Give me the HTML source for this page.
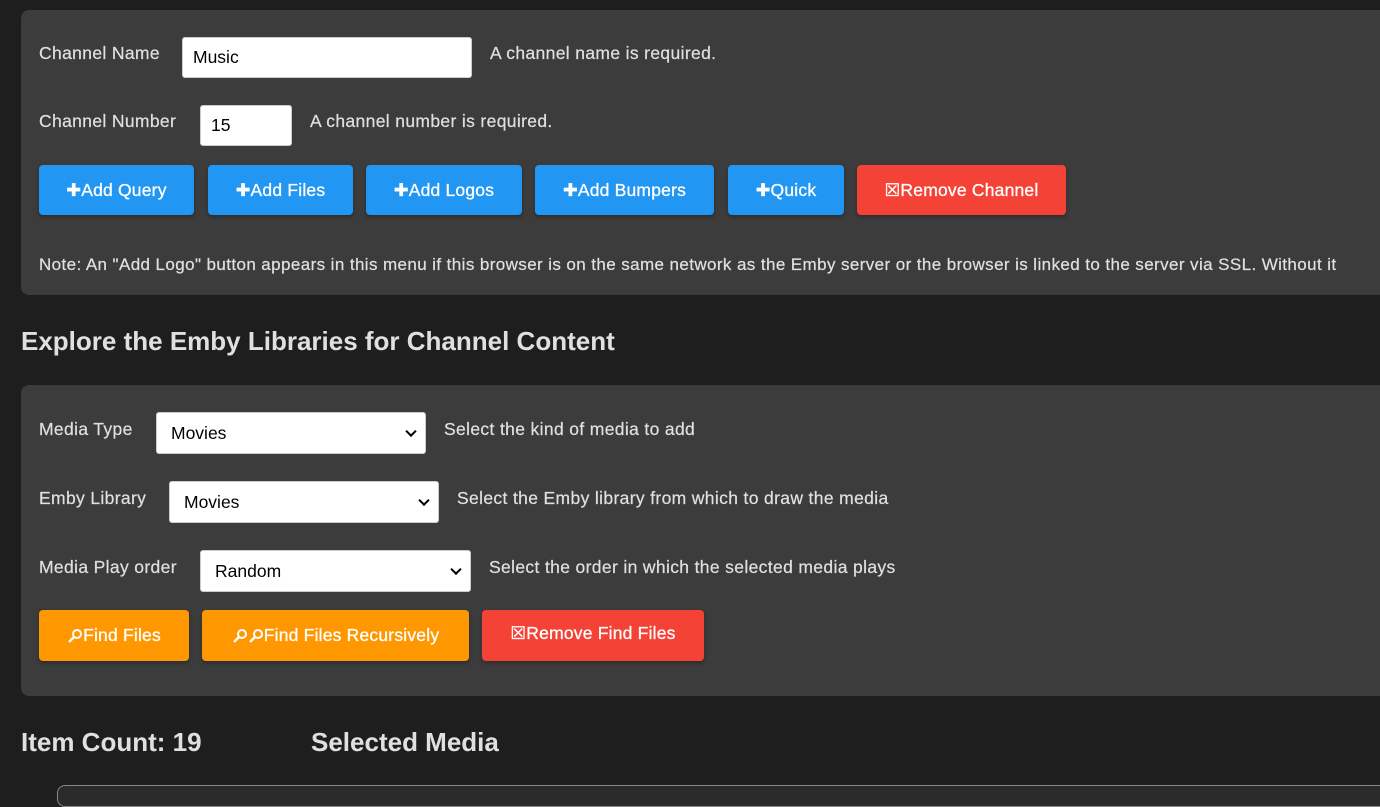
<!DOCTYPE html>
<html><head><style>
body{margin:0;width:1380px;height:789px;overflow:hidden;background:#1e1e1e;font-family:"Liberation Sans",Arial,sans-serif;color:#e0e0e0;position:relative}
.a{position:absolute;white-space:nowrap}
.p{position:absolute;left:21px;width:1400px;background:#3c3c3c;border-radius:8px}
.t{font-size:17.5px;letter-spacing:0.35px;color:#e0e0e0;-webkit-text-stroke:0.2px #e0e0e0}
.in{position:absolute;background:#fff;border:1px solid #ccc;border-radius:3px;color:#000;font-size:17.5px;box-sizing:border-box;padding:0 0 0 10px;display:flex;align-items:center}
.sel{padding-left:14px}
.sel:after{content:"";position:absolute;right:10px;top:50%;width:6px;height:6px;border-right:2px solid #000;border-bottom:2px solid #000;transform:translateY(-70%) rotate(45deg)}
.b{position:absolute;height:50px;border-radius:4px;color:#fff;font-size:17.5px;letter-spacing:0.2px;-webkit-text-stroke:0.3px #fff;display:flex;align-items:center;justify-content:center;box-shadow:0 2px 4px rgba(0,0,0,.3)}
.bl{background:#2196f3}.or{background:#ff9800}.rd{background:#f44336}
h2{margin:0;font-size:26px;font-weight:bold;color:#e0e0e0}
svg{display:inline-block;vertical-align:middle}
</style></head><body>
<div class="p" style="top:10px;height:285px"></div>
<div class="a t" style="left:39px;top:43px">Channel Name</div>
<div class="in" style="left:182px;top:37px;width:290px;height:41px">Music</div>
<div class="a t" style="left:490px;top:43px">A channel name is required.</div>
<div class="a t" style="left:39px;top:111px">Channel Number</div>
<div class="in" style="left:200px;top:105px;width:92px;height:41px">15</div>
<div class="a t" style="left:310px;top:111px">A channel number is required.</div>
<div class="b bl" style="left:39px;top:165px;width:155px">✚Add Query</div>
<div class="b bl" style="left:208px;top:165px;width:145px">✚Add Files</div>
<div class="b bl" style="left:366px;top:165px;width:156px">✚Add Logos</div>
<div class="b bl" style="left:535px;top:165px;width:179px">✚Add Bumpers</div>
<div class="b bl" style="left:728px;top:165px;width:116px">✚Quick</div>
<div class="b rd" style="left:857px;top:165px;width:209px">☒Remove Channel</div>
<div class="a t" style="left:39px;top:255px;font-size:17px;letter-spacing:0.4px">Note: An "Add Logo" button appears in this menu if this browser is on the same network as the Emby server or the browser is linked to the server via SSL. Without it</div>
<h2 class="a" style="left:21px;top:326px">Explore the Emby Libraries for Channel Content</h2>
<div class="p" style="top:385px;height:311px"></div>
<div class="a t" style="left:39px;top:419px">Media Type</div>
<div class="in sel" style="left:156px;top:412px;width:270px;height:42px">Movies</div>
<div class="a t" style="left:444px;top:419px">Select the kind of media to add</div>
<div class="a t" style="left:39px;top:488px">Emby Library</div>
<div class="in sel" style="left:169px;top:481px;width:270px;height:42px">Movies</div>
<div class="a t" style="left:457px;top:488px">Select the Emby library from which to draw the media</div>
<div class="a t" style="left:39px;top:557px">Media Play order</div>
<div class="in sel" style="left:200px;top:550px;width:271px;height:42px">Random</div>
<div class="a t" style="left:489px;top:557px">Select the order in which the selected media plays</div>
<div class="b or" style="left:39px;top:610px;width:150px;height:51px"><svg width="16" height="16" viewBox="0 0 16 16"><circle cx="10" cy="6" r="4" fill="none" stroke="#fff" stroke-width="2"/><path d="M7 9L2 14" stroke="#fff" stroke-width="2.5"/></svg>Find Files</div>
<div class="b or" style="left:202px;top:610px;width:267px;height:51px"><svg width="16" height="16" viewBox="0 0 16 16"><circle cx="10" cy="6" r="4" fill="none" stroke="#fff" stroke-width="2"/><path d="M7 9L2 14" stroke="#fff" stroke-width="2.5"/></svg><svg width="16" height="16" viewBox="0 0 16 16"><circle cx="10" cy="6" r="4" fill="none" stroke="#fff" stroke-width="2"/><path d="M7 9L2 14" stroke="#fff" stroke-width="2.5"/></svg>Find Files Recursively</div>
<div class="b rd" style="left:482px;top:610px;width:222px;height:51px;padding-bottom:4px;box-sizing:border-box">☒Remove Find Files</div>
<h2 class="a" style="left:21px;top:727px">Item Count: 19</h2>
<h2 class="a" style="left:311px;top:727px">Selected Media</h2>
<div class="a" style="left:57px;top:785px;width:1400px;height:20px;border:1px solid #888;border-radius:8px;background:#2a2a2a"></div>
</body></html>
